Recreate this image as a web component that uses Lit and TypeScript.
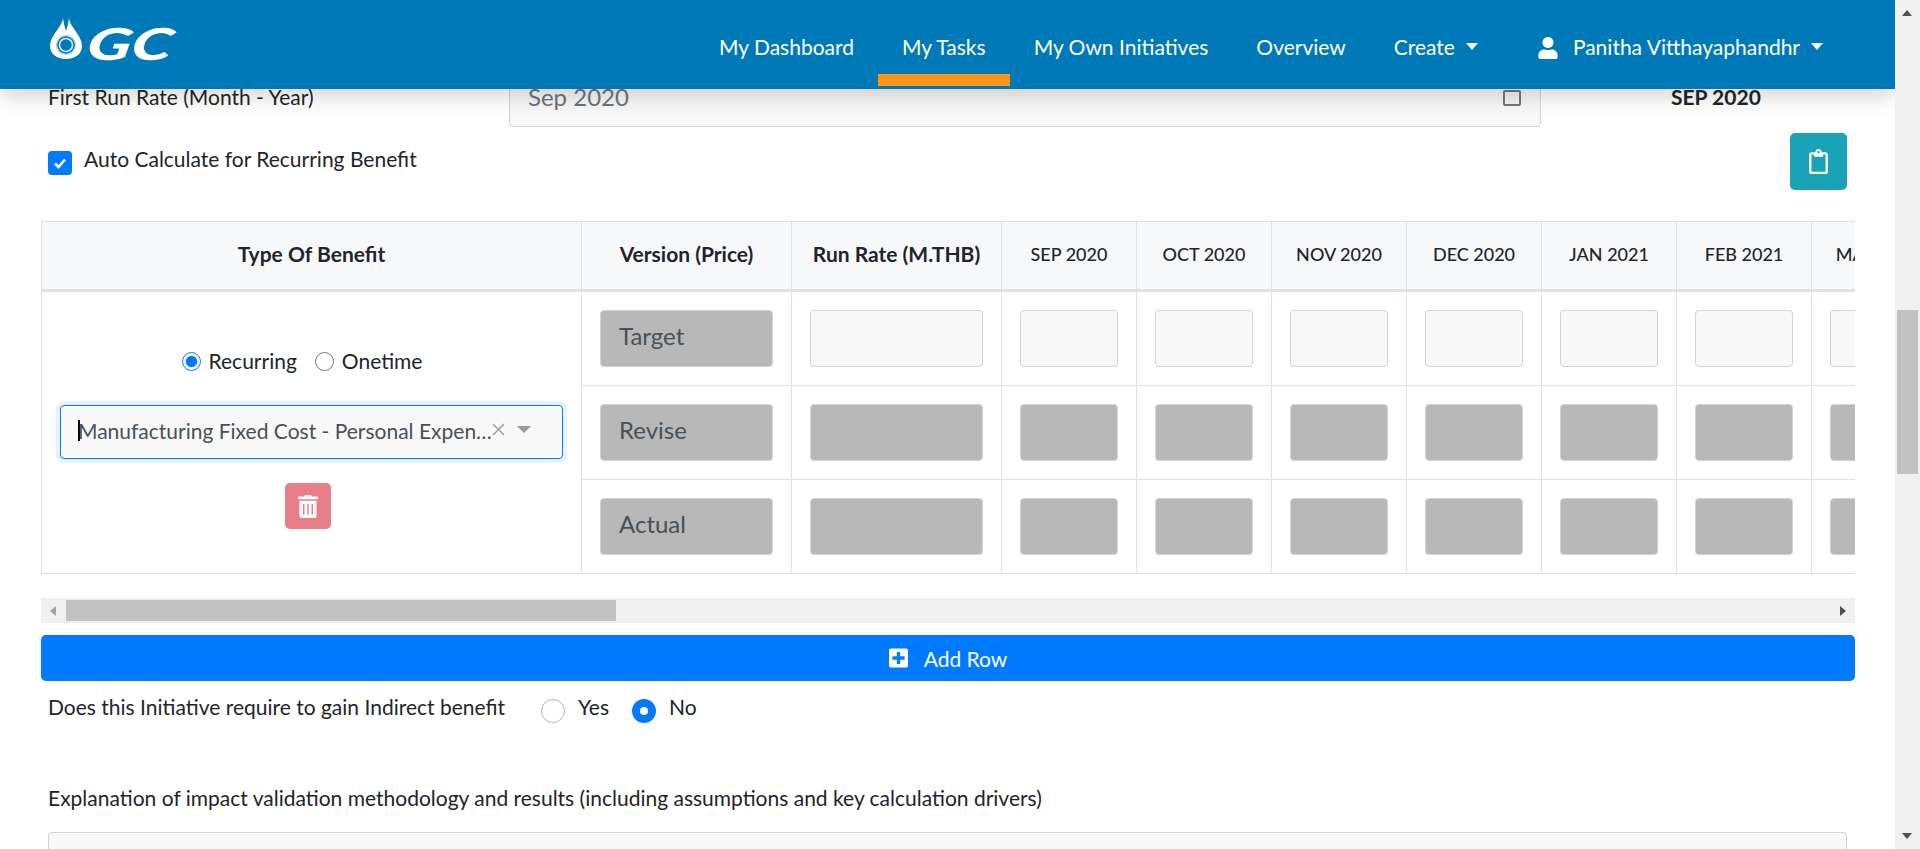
import { LitElement, html, css, svg } from 'lit';
import { customElement } from 'lit/decorators.js';

const navLinks = ['My Dashboard', 'My Tasks', 'My Own Initiatives', 'Overview'];
const months = ['SEP 2020', 'OCT 2020', 'NOV 2020', 'DEC 2020', 'JAN 2021', 'FEB 2021', 'MAR 2021'];
const versions = ['Target', 'Revise', 'Actual'];

const userIcon = svg`<path d="M224 256c70.7 0 128-57.3 128-128S294.7 0 224 0 96 57.3 96 128s57.3 128 128 128zm89.6 32h-16.7c-22.2 10.2-46.9 16-72.9 16s-50.6-5.8-72.9-16h-16.7C60.2 288 0 348.2 0 422.4V464c0 26.5 21.5 48 48 48h352c26.5 0 48-21.5 48-48v-41.6c0-74.2-60.2-134.4-134.4-134.4z"/>`;
const trashIcon = svg`<path d="M32 464a48 48 0 0 0 48 48h288a48 48 0 0 0 48-48V128H32zm272-256a16 16 0 0 1 32 0v224a16 16 0 0 1-32 0zm-96 0a16 16 0 0 1 32 0v224a16 16 0 0 1-32 0zm-96 0a16 16 0 0 1 32 0v224a16 16 0 0 1-32 0zM432 32H312l-9.4-18.7A24 24 0 0 0 281.1 0H166.8a23.72 23.72 0 0 0-21.4 13.3L136 32H16A16 16 0 0 0 0 48v32a16 16 0 0 0 16 16h416a16 16 0 0 0 16-16V48a16 16 0 0 0-16-16z"/>`;
const plusIcon = svg`<path d="M400 32H48C21.5 32 0 53.5 0 80v352c0 26.5 21.5 48 48 48h352c26.5 0 48-21.5 48-48V80c0-26.5-21.5-48-48-48zm-32 252c0 6.6-5.4 12-12 12h-92v92c0 6.6-5.4 12-12 12h-56c-6.6 0-12-5.4-12-12v-92H92c-6.6 0-12-5.4-12-12v-56c0-6.6 5.4-12 12-12h92v-92c0-6.6 5.4-12 12-12h56c6.6 0 12 5.4 12 12v92h92c6.6 0 12 5.4 12 12v56z"/>`;
const clipboardIcon = svg`<path d="M336 64h-80c0-35.3-28.7-64-64-64s-64 28.7-64 64H48C21.5 64 0 85.5 0 112v352c0 26.5 21.5 48 48 48h288c26.5 0 48-21.5 48-48V112c0-26.5-21.5-48-48-48zM192 40c13.3 0 24 10.7 24 24s-10.7 24-24 24-24-10.7-24-24 10.7-24 24-24zm144 418c0 3.3-2.7 6-6 6H54c-3.3 0-6-2.7-6-6V118c0-3.3 2.7-6 6-6h42v36c0 6.6 5.4 12 12 12h168c6.6 0 12-5.4 12-12v-36h42c3.3 0 6 2.7 6 6z"/>`;

@customElement('app-root')
export class AppRoot extends LitElement {
  static styles = css`
    :host {
      display: flex;
      height: 849px;
      overflow: hidden;
      font-family: 'Lato', sans-serif;
      font-size: 21px;
      color: #212529;
      background: #fff;
    }
    * { box-sizing: border-box; }
    .main {
      position: relative;
      flex: 1;
      min-width: 0;
      overflow: hidden;
      padding: 70px 40px 0 41px;
    }

    /* top bar */
    .nav {
      position: absolute;
      top: 0;
      left: 0;
      right: 0;
      height: 89px;
      display: flex;
      justify-content: space-between;
      padding: 0 48px 0 50px;
      background: #0079b8;
      box-shadow: 0 9px 18px rgba(0, 0, 0, .15);
      z-index: 5;
    }
    .brand {
      display: flex;
      align-items: flex-start;
      gap: 6px;
      padding-top: 18px;
    }
    .brand svg { width: 32px; height: 41px; }
    .brand-text {
      display: inline-block;
      margin-top: 5px;
      font-size: 44px;
      line-height: 41px;
      font-weight: 900;
      font-style: italic;
      color: #fff;
      transform: skewX(-10deg) scaleX(1.49);
      transform-origin: left center;
    }
    .links { display: flex; }
    .link {
      position: relative;
      display: flex;
      align-items: flex-start;
      height: 86px;
      padding: 32px 24px 0;
      color: #fff;
      font-size: 21px;
      line-height: 30px;
      white-space: nowrap;
    }
    .link.create { margin-right: 12px; }
    .link.active::after {
      content: '';
      position: absolute;
      left: 0;
      right: 0;
      bottom: 0;
      height: 12px;
      background: #ff951c;
    }
    .caret {
      width: 0;
      height: 0;
      margin: 11px 0 0 11px;
      border-top: 7px solid #fff;
      border-left: 6.5px solid transparent;
      border-right: 6.5px solid transparent;
    }
    .user-icon { width: 20px; height: 22px; margin: 5px 15px 0 0; fill: #fff; }

    /* first run rate */
    .run-row {
      display: grid;
      grid-template-columns: 461px 1032px 1fr;
      padding-left: 7px;
    }
    .run-label { padding-top: 15px; line-height: 24px; }
    .date-input {
      height: 57px;
      display: flex;
      align-items: center;
      justify-content: space-between;
      padding: 0 19px 5px 18px;
      background: #f8f8f8;
      border: 1px solid #ced4da;
      border-radius: 4px;
      font-size: 24px;
      color: #6c757d;
    }
    .date-input i {
      width: 18px;
      height: 16px;
      margin-top: 3px;
      border: 2px solid #767676;
      border-radius: 2px;
      background: #f4f4f4;
    }
    .run-value { padding: 14px 0 0 130px; font-weight: 700; line-height: 26px; white-space: nowrap; }

    .auto-row {
      display: flex;
      justify-content: space-between;
      margin-top: 6px;
      padding: 0 8px 0 7px;
    }
    .auto-check { display: flex; gap: 12px; padding-top: 18px; line-height: 20px; }
    .auto-check span:last-child { margin-top: -2px; }
    .check {
      width: 24px;
      height: 24px;
      display: flex;
      align-items: center;
      justify-content: center;
      border-radius: 4px;
      background: #007bff;
    }
    .check svg { width: 14px; height: 14px; }
    .clip-btn {
      width: 57px;
      height: 57px;
      display: flex;
      align-items: center;
      justify-content: center;
      border-radius: 5px;
      background: #1aa3b8;
    }
    .clip-btn svg { width: 19px; height: 25px; fill: #fff; }

    /* benefit table */
    .table-wrap { margin-top: 31px; overflow: hidden; }
    table { border-collapse: separate; border-spacing: 0; table-layout: fixed; }
    th {
      height: 71px;
      padding: 0 0 4px;
      background: #f7f8fa;
      border-top: 1px solid #dee2e6;
      border-right: 1px solid #dee2e6;
      border-bottom: 3px solid #dee2e6;
      font-size: 21px;
      font-weight: 700;
      text-align: center;
      white-space: nowrap;
    }
    th.first { border-left: 1px solid #dee2e6; }
    th.month { font-size: 18px; font-weight: 500; }
    td {
      height: 94px;
      padding: 18px;
      border-right: 1px solid #dee2e6;
      border-bottom: 1px solid #dee2e6;
    }
    td.type {
      vertical-align: top;
      padding: 60px 18px 0;
      border-left: 1px solid #dee2e6;
    }
    .cell-input {
      display: block;
      width: 100%;
      height: 57px;
      padding: 0 18px 7px;
      font: 24px 'Lato', sans-serif;
      color: #495057;
      background: #f8f8f8;
      border: 1px solid #ced4da;
      border-radius: 4px;
      outline: none;
    }
    .cell-input.off { background: #b8b8b8; }
    .type-radios {
      display: flex;
      justify-content: center;
      align-items: center;
      height: 19px;
      margin-right: 19px;
      gap: 8px;
      font-size: 21px;
    }
    .type-radios span { margin-top: -2px; }
    .type-radios input { width: 19px; height: 19px; margin: 0; accent-color: #007bff; }
    .type-radios input + span + input { margin-left: 10px; }
    .select {
      display: flex;
      align-items: center;
      height: 54px;
      margin-top: 34px;
      padding: 0 31px 3px 17px;
      background: #f8f8f8;
      border: 1px solid #007bff;
      border-radius: 4px;
      box-shadow: 0 0 0 4px rgba(0, 123, 255, .1);
      font-size: 21px;
      color: #495057;
    }
    .select-cursor { flex: none; width: 2px; height: 21px; margin-right: -2px; background: #000; }
    .select-text { flex: 1; min-width: 0; overflow: hidden; text-overflow: ellipsis; white-space: nowrap; }
    .select svg { flex: none; width: 13px; height: 13px; margin: -2px 12px 0 -3px; }
    .select b {
      flex: none;
      width: 0;
      height: 0;
      margin-top: -2px;
      border-top: 7px solid #999;
      border-left: 7.5px solid transparent;
      border-right: 7.5px solid transparent;
    }
    .del-btn {
      width: 46px;
      height: 46px;
      display: flex;
      align-items: center;
      justify-content: center;
      margin: 24px 0 0 225px;
      border-radius: 5px;
      background: #e97d88;
    }
    .del-btn svg { width: 20px; height: 23px; fill: #fff; }

    /* table scrollbar */
    .h-scroll {
      display: flex;
      align-items: center;
      height: 25px;
      margin-top: 24px;
      background: #f0f0f0;
    }
    .h-scroll .left {
      width: 0; height: 0; margin-left: 9px;
      border-top: 5.5px solid transparent;
      border-bottom: 5.5px solid transparent;
      border-right: 6px solid #a3a3a3;
    }
    .h-scroll .thumb { width: 550px; height: 21px; margin-left: 10px; background: #c1c1c1; }
    .h-scroll .right {
      width: 0; height: 0; margin: 0 9px 0 auto;
      border-top: 5.5px solid transparent;
      border-bottom: 5.5px solid transparent;
      border-left: 6px solid #505050;
    }

    .add-btn {
      display: flex;
      align-items: center;
      justify-content: center;
      gap: 16px;
      height: 46px;
      margin-top: 12px;
      border-radius: 5px;
      background: #007bff;
      color: #fff;
      font-size: 21px;
    }
    .add-btn svg { width: 19px; height: 22px; fill: #fff; }

    .indirect {
      display: flex;
      align-items: flex-start;
      margin-top: 18px;
      padding-left: 7px;
      line-height: 20px;
    }
    .indirect-label { width: 493px; margin-top: -2px; }
    .opt { display: flex; gap: 13px; margin-right: 23px; }
    .opt span { margin-top: -2px; }
    .opt i {
      width: 24px;
      height: 24px;
      border: 1px solid #adb5bd;
      border-radius: 50%;
      background: #fff;
    }
    .opt i.on { border: 8px solid #007bff; }

    .explain { margin-top: 63px; padding-left: 7px; line-height: 24px; }
    .textarea {
      height: 120px;
      margin: 22px 8px 0 7px;
      background: #f8f8f8;
      border: 1px solid #ced4da;
      border-radius: 4px;
    }

    /* page scrollbar */
    .v-scroll {
      flex: none;
      width: 25px;
      display: flex;
      flex-direction: column;
      background: #f0f0f0;
    }
    .v-scroll .up {
      width: 0; height: 0; margin: 10px 0 0 7px;
      border-left: 5.5px solid transparent;
      border-right: 5.5px solid transparent;
      border-bottom: 6px solid #505050;
    }
    .v-scroll .thumb {
      width: 21px;
      height: 164px;
      margin: 294px 0 0 2px;
      background: #c1c1c1;
    }
    .v-scroll .down {
      width: 0; height: 0; margin: auto 0 10px 7px;
      border-left: 5.5px solid transparent;
      border-right: 5.5px solid transparent;
      border-top: 6px solid #505050;
    }
  `;

  renderVersionRow(version: string, i: number) {
    const off = i > 0;
    return html`
      <tr>
        ${i === 0 ? this.renderTypeCell() : ''}
        <td><input class="cell-input off" readonly .value=${version} /></td>
        <td><input class="cell-input ${off ? 'off' : ''}" readonly /></td>
        ${months.map(() => html`<td><input class="cell-input ${off ? 'off' : ''}" readonly /></td>`)}
      </tr>
    `;
  }

  renderTypeCell() {
    return html`
      <td class="type" rowspan="3">
        <div class="type-radios">
          <input type="radio" name="benefit" checked />
          <span>Recurring</span>
          <input type="radio" name="benefit" />
          <span>Onetime</span>
        </div>
        <div class="select">
          <span class="select-cursor"></span>
          <span class="select-text">Manufacturing Fixed Cost - Personal Expenses and Other Costs</span>
          <svg viewBox="0 0 13 13"><path d="M1 1l11 11M12 1L1 12" stroke="#999" stroke-width="1.4" fill="none" /></svg>
          <b></b>
        </div>
        <div class="del-btn"><svg viewBox="0 0 448 512">${trashIcon}</svg></div>
      </td>
    `;
  }

  render() {
    const tableWidth = 541 + 210 + 210 + months.length * 135;
    return html`
      <div class="main">
        <header class="nav">
          <div class="brand">
            <svg viewBox="0 0 32 41">
              <path d="M13 0C13 8 0 17 0 28c0 8 7 13 16 13s16-5 16-13C32 17 19 8 19 0c-1 7-2 10-3 13-1-3-2-6-3-13z" fill="#fff" />
              <circle cx="16" cy="27" r="9" fill="#0079b8" />
              <circle cx="16" cy="27" r="9.500" fill="none" stroke="#a9d2e8" stroke-width="1.200" />
              <circle cx="16" cy="27" r="6.500" fill="none" stroke="#d5e9f4" stroke-width="1.600" />
            </svg>
            <span class="brand-text">GC</span>
          </div>
          <nav class="links">
            ${navLinks.map((l) => html`<div class="link ${l === 'My Tasks' ? 'active' : ''}">${l}</div>`)}
            <div class="link create">Create<span class="caret"></span></div>
            <div class="link">
              <svg class="user-icon" viewBox="0 0 448 512">${userIcon}</svg>
              Panitha Vitthayaphandhr<span class="caret"></span>
            </div>
          </nav>
        </header>

        <div class="run-row">
          <div class="run-label">First Run Rate (Month - Year)</div>
          <div class="date-input">Sep 2020<i></i></div>
          <div class="run-value">SEP 2020</div>
        </div>

        <div class="auto-row">
          <div class="auto-check">
            <span class="check">
              <svg viewBox="0 0 14 14"><path d="M2 7.500l3.500 3.500L12 3.500" stroke="#fff" stroke-width="2.600" fill="none" /></svg>
            </span>
            <span>Auto Calculate for Recurring Benefit</span>
          </div>
          <div class="clip-btn"><svg viewBox="0 0 384 512">${clipboardIcon}</svg></div>
        </div>

        <div class="table-wrap">
          <table style="width:${tableWidth}px">
            <colgroup>
              <col style="width:541px" /><col style="width:210px" /><col style="width:210px" />
              ${months.map(() => html`<col style="width:135px" />`)}
            </colgroup>
            <thead>
              <tr>
                <th class="first">Type Of Benefit</th>
                <th>Version (Price)</th>
                <th>Run Rate (M.THB)</th>
                ${months.map((m) => html`<th class="month">${m}</th>`)}
              </tr>
            </thead>
            <tbody>
              ${versions.map((v, i) => this.renderVersionRow(v, i))}
            </tbody>
          </table>
        </div>

        <div class="h-scroll"><span class="left"></span><span class="thumb"></span><span class="right"></span></div>

        <div class="add-btn"><svg viewBox="0 0 448 512">${plusIcon}</svg><span>Add Row</span></div>

        <div class="indirect">
          <span class="indirect-label">Does this Initiative require to gain Indirect benefit</span>
          <span class="opt"><i></i><span>Yes</span></span>
          <span class="opt"><i class="on"></i><span>No</span></span>
        </div>

        <div class="explain">Explanation of impact validation methodology and results (including assumptions and key calculation drivers)</div>
        <div class="textarea"></div>
      </div>
      <div class="v-scroll"><div class="up"></div><div class="thumb"></div><div class="down"></div></div>
    `;
  }
}
